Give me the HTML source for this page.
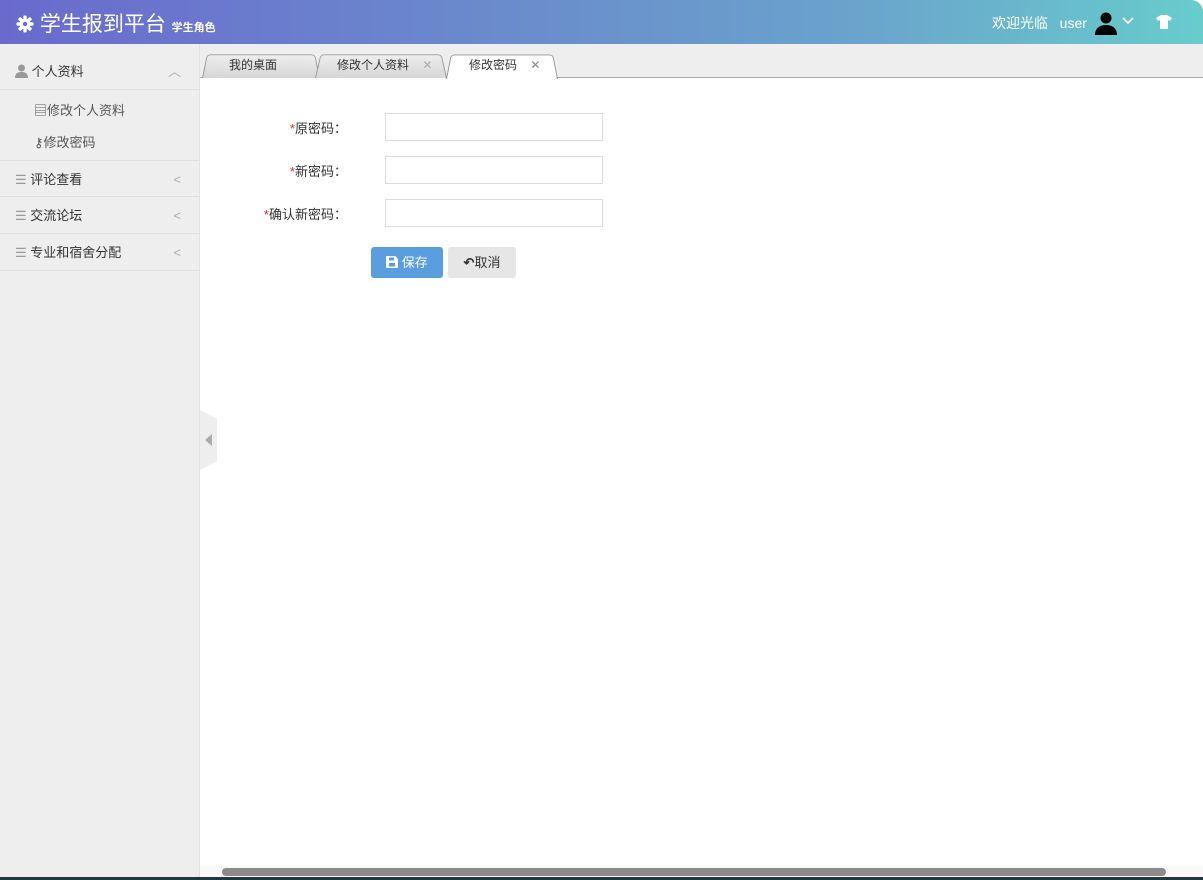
<!DOCTYPE html>
<html><head><meta charset="utf-8"><style>
*{margin:0;padding:0;box-sizing:border-box}
body{width:1203px;height:880px;overflow:hidden;font-family:"Liberation Sans","Noto Sans CJK SC",sans-serif;font-size:13px;color:#333;background:#fff;position:relative}
.hdr{position:absolute;left:0;top:0;width:1203px;height:44px;background:linear-gradient(90deg,#6a6acd,#6aa2cc 70%,#68cccc);border-top-right-radius:12px}
.logo{position:absolute;left:16px;top:8px;color:#fff;font-size:21px}
.logo small{font-size:11px;font-weight:bold}
.side{position:absolute;left:0;top:44px;width:200px;height:836px;background:#eeeeee;border-right:1px solid #e2e2e2}
.item{height:37px;border-bottom:1px solid #e0e0e0;line-height:37px;padding-left:15px;font-size:13px;color:#333;position:relative}
.item .ar{position:absolute;right:18px;top:0;color:#aaa}
.sub{height:32px;line-height:32px;padding-left:34px;color:#555}
.tabs{position:absolute;left:200px;top:44px;right:0;height:34px;background:#eeeeef;border-bottom:1px solid #aaa}
.tab{position:absolute;top:8px;height:26px;line-height:24px;font-size:12px;color:#333;background:linear-gradient(#eee,#d6d6d6);border:1px solid #999;border-bottom:none;border-radius:4px 4px 0 0;transform:perspective(40px) rotateX(8deg);transform-origin:bottom}
.tl{position:absolute;top:52px;height:26px;line-height:26px;font-size:12px;color:#333}
.lab{position:absolute;width:152px;text-align:right;left:195px;font-size:13px;color:#333}
.lab b{color:#e22;font-weight:normal}
.inp{position:absolute;left:385px;width:218px;height:28px;border:1px solid #ddd;background:#fff}
</style></head><body>
<div class="hdr">
<div class="logo"><svg width="18" height="18" viewBox="0 0 18 18" style="vertical-align:-2px"><g fill="#fff"><circle cx="9" cy="9" r="5.5"/><g id="t"><rect x="7.3" y="0.5" width="3.4" height="4" rx="1"/><rect x="7.3" y="13.5" width="3.4" height="4" rx="1"/></g><use href="#t" transform="rotate(45 9 9)"/><use href="#t" transform="rotate(90 9 9)"/><use href="#t" transform="rotate(135 9 9)"/></g><circle cx="9" cy="9" r="2.2" fill="#6a6acd"/></svg> 学生报到平台 <small>学生角色</small></div>
<div style="position:absolute;left:992px;top:13px;color:#fff;font-size:14px">欢迎光临&nbsp;&nbsp; user</div>
<svg style="position:absolute;left:1094px;top:11px" width="24" height="24" viewBox="0 0 24 24"><circle cx="12" cy="7" r="5.5" fill="#000"/><path d="M1 24c0-7 5-10 11-10s11 3 11 10z" fill="#000"/></svg>
<svg style="position:absolute;left:1122px;top:16px" width="12" height="10"><path d="M1 2l5 5 5-5" stroke="#fff" stroke-width="1.6" fill="none"/></svg>
<svg style="position:absolute;left:1156px;top:15px" width="16" height="14" viewBox="0 0 16 14"><path d="M5 0h6l5 3-2 3-2-1v9H4V5L2 6 0 3z" fill="#fff"/></svg>
</div>
<div class="side">
<div class="item" style="height:46px;line-height:55px;color:#333">
<svg width="13" height="14" viewBox="0 0 13 14" style="vertical-align:-2px"><circle cx="6.5" cy="4" r="3.5" fill="#999"/><path d="M0 14c0-5 3-6 6.5-6S13 9 13 14z" fill="#999"/></svg> 个人资料<span class="ar" style="line-height:55px">︿</span></div>
<div style="padding:5px 0 1px">
<div class="sub">▤修改个人资料</div>
<div class="sub">⚷修改密码</div></div>
<div class="item" style="border-top:1px solid #e0e0e0"><span style="color:#999">☰</span> 评论查看<span class="ar">&lt;</span></div>
<div class="item"><span style="color:#999">☰</span> 交流论坛<span class="ar">&lt;</span></div>
<div class="item"><span style="color:#999">☰</span> 专业和宿舍分配<span class="ar">&lt;</span></div>
</div>
<div class="tabs"></div>
<div class="tab" style="left:202px;top:52px;width:118px"></div>
<div class="tab" style="left:315px;top:52px;width:132px"></div>
<div class="tab" style="left:446px;top:52px;width:112px;background:#fff;height:27px"></div>
<div class="tl" style="left:229px">我的桌面</div>
<div class="tl" style="left:337px">修改个人资料 <span style="color:#aaa;margin-left:10px">✕</span></div>
<div class="tl" style="left:469px">修改密码 <span style="color:#888;margin-left:10px">✕</span></div>
<div class="lab" style="top:118px"><b>*</b>原密码：</div>
<div class="lab" style="top:161px"><b>*</b>新密码：</div>
<div class="lab" style="top:204px"><b>*</b>确认新密码：</div>
<div class="inp" style="top:113px"></div>
<div class="inp" style="top:156px"></div>
<div class="inp" style="top:199px"></div>
<div style="position:absolute;left:371px;top:247px;width:72px;height:31px;background:#5b9ee0;border-radius:3px;color:#fff;line-height:31px;text-align:center;font-size:13px"><svg width="12" height="12" viewBox="0 0 12 12" style="vertical-align:-1px"><path d="M0 1a1 1 0 011-1h8l3 3v8a1 1 0 01-1 1H1a1 1 0 01-1-1z" fill="#fff"/><rect x="3" y="1.5" width="5" height="3" fill="#5b9ee0"/><rect x="3" y="7" width="6" height="3.5" fill="#5b9ee0"/></svg> 保存</div>
<div style="position:absolute;left:448px;top:247px;width:68px;height:31px;background:#e6e6e6;border-radius:3px;color:#333;line-height:31px;text-align:center;font-size:13px"><b>↶</b>取消</div>
<div style="position:absolute;left:200px;top:410px;width:17px;height:60px;background:#eee;clip-path:polygon(0 0,100% 15%,100% 85%,0 100%)"></div>
<div style="position:absolute;left:205px;top:434px;width:0;height:0;border-right:7px solid #aaa;border-top:6px solid transparent;border-bottom:6px solid transparent"></div>
<div style="position:absolute;left:200px;top:866px;width:1003px;height:11px;background:#f8f8f8"></div>
<div style="position:absolute;left:222px;top:868px;width:944px;height:8px;background:#8b8b8b;border-radius:4px"></div>
<div style="position:absolute;left:0;top:877px;width:1203px;height:3px;background:#243640"></div>
</body></html>
